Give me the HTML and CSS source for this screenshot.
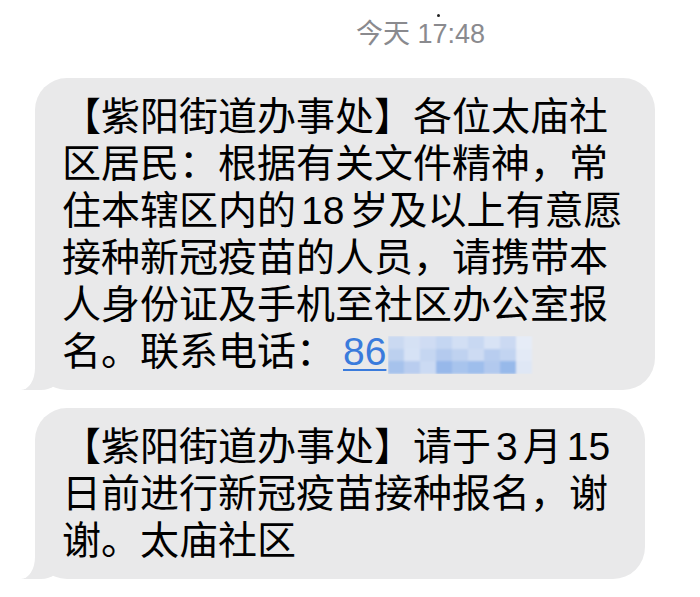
FILE: index.html
```html
<html>
<head>
<title>信息</title>
<link rel="stylesheet" href="styles.css">
</head>
<body>
<div id="thread">
    <div class="stamp">今天 17:48<span class="speck"></span></div>

    <div class="bubble">【紫阳街道办事处】各位太庙社区居民：根据有关文件精神，常住本辖区内的<span class="num">18</span>岁及以上有意愿接种新冠疫苗的人员，请携带本人身份证及手机至社区办公室报名。联系电话：<a class="tel" href="#">86</a><svg class="mask" width="146" height="38" viewBox="0 0 146 38">
            <defs><filter id="soft"><feGaussianBlur stdDeviation="1.2"/></filter></defs>
            <g filter="url(#soft)">
                <rect x="0" y="0" width="16" height="13" fill="#cad9f1"/>
                <rect x="16" y="0" width="16" height="13" fill="#d5e1f4"/>
                <rect x="32" y="0" width="16" height="13" fill="#cfdcf3"/>
                <rect x="48" y="0" width="16" height="13" fill="#c4d6f2"/>
                <rect x="64" y="0" width="16" height="13" fill="#d2dff4"/>
                <rect x="80" y="0" width="16" height="13" fill="#c8d8f2"/>
                <rect x="96" y="0" width="16" height="13" fill="#d8e3f5"/>
                <rect x="112" y="0" width="16" height="13" fill="#cbd9f2"/>
                <rect x="128" y="0" width="16" height="13" fill="#e6ecf7"/>
                <rect x="0" y="13" width="16" height="12" fill="#bcd0ef"/>
                <rect x="16" y="13" width="16" height="12" fill="#d6e2f5"/>
                <rect x="32" y="13" width="16" height="12" fill="#c5d6f1"/>
                <rect x="48" y="13" width="16" height="12" fill="#b4caee"/>
                <rect x="64" y="13" width="16" height="12" fill="#bfd2f0"/>
                <rect x="80" y="13" width="16" height="12" fill="#cddbf3"/>
                <rect x="96" y="13" width="16" height="12" fill="#b8cdef"/>
                <rect x="112" y="13" width="16" height="12" fill="#c2d4f1"/>
                <rect x="128" y="13" width="16" height="12" fill="#e3eaf6"/>
                <rect x="0" y="25" width="16" height="13" fill="#a6c2ec"/>
                <rect x="16" y="25" width="16" height="13" fill="#b9cdef"/>
                <rect x="32" y="25" width="16" height="13" fill="#cbdaf3"/>
                <rect x="48" y="25" width="16" height="13" fill="#97b8ea"/>
                <rect x="64" y="25" width="16" height="13" fill="#a8c4ed"/>
                <rect x="80" y="25" width="16" height="13" fill="#9ebeec"/>
                <rect x="96" y="25" width="16" height="13" fill="#b2c9ee"/>
                <rect x="112" y="25" width="16" height="13" fill="#97b9ea"/>
                <rect x="128" y="25" width="16" height="13" fill="#dfe7f5"/>
            </g>
        </svg></div>

    <div class="bubble narrow">【紫阳街道办事处】请于<span class="num">3</span>月<span class="num">15</span>日前进行新冠疫苗接种报名，谢谢。太庙社区</div>
</div>
</body>
</html>
```

FILE: styles.css
```css
body{
    margin: 0;
    background-color: #ffffff;
    font-family: "Liberation Sans", "Noto Sans CJK SC", sans-serif;
}

#thread{
    padding: 19px 0 0 35px;
}

.stamp{
    position: relative;
    padding-left: 321px;
    font-size: 27px;
    line-height: 30px;
    color: #8a8a8e;
    margin-bottom: 29px;
}
.speck{
    position: absolute;
    left: 402px;
    top: -5px;
    width: 3px;
    height: 3px;
    border-radius: 50%;
    background-color: #222;
}

.bubble{
    position: relative;
    box-sizing: border-box;
    width: 620px;
    padding: 15px 21px 15px 27px;
    margin-bottom: 18px;
    background-color: #e9e9ea;
    border-radius: 32px;
    font-size: 39px;
    line-height: 47px;
    color: #000;
}
.bubble.narrow{
    width: 610px;
    padding-right: 11px;
}

/* the little tail at the bottom left */
.bubble::before{
    content: "";
    position: absolute;
    left: -14px;
    bottom: 0;
    width: 40px;
    height: 34px;
    background-color: #e9e9ea;
    border-bottom-right-radius: 20px 16px;
}
.bubble::after{
    content: "";
    position: absolute;
    left: -40px;
    bottom: 0;
    width: 40px;
    height: 34px;
    background-color: #ffffff;
    border-bottom-right-radius: 14px 22px;
}

.num{
    margin: 0 5px;
}

.tel{
    margin-left: 8px;
    color: #3a7bdc;
    text-decoration: underline;
    text-decoration-thickness: 2px;
    text-underline-offset: 4px;
}
.mask{
    vertical-align: middle;
    margin-left: 2px;
}
```
